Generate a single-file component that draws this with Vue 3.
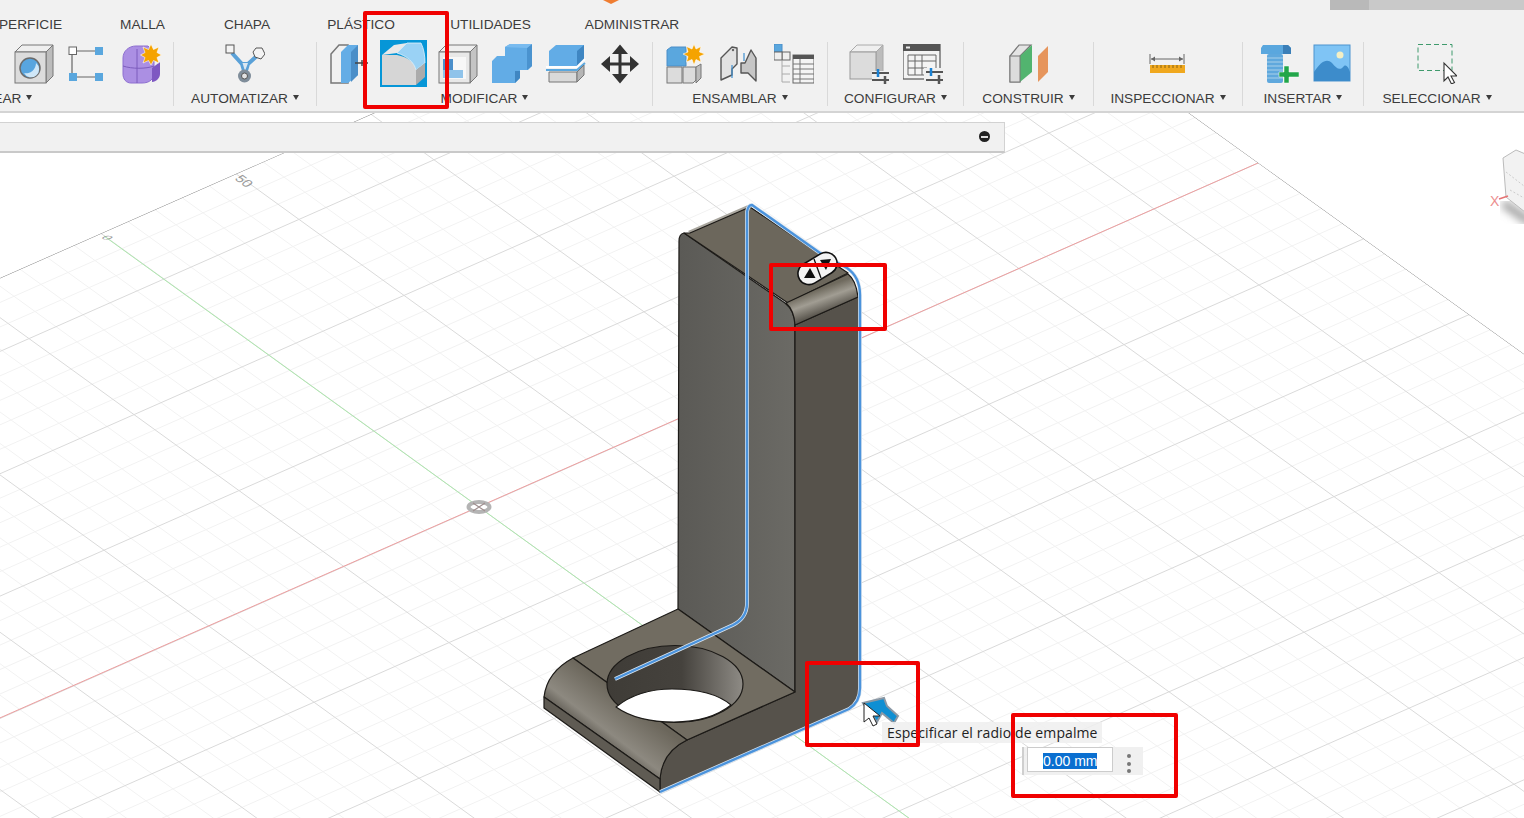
<script setup>
const tabs = ["SUPERFICIE", "MALLA", "CHAPA", "PLÁSTICO", "UTILIDADES", "ADMINISTRAR"];

// grid of the ground plane, in page pixels
const origin = [479, 507];
const stepU = [135, -59.6];
const stepV = [105, 76];

function at(u, v) {
  return [origin[0] + u * stepU[0] + v * stepV[0], origin[1] + u * stepU[1] + v * stepV[1]];
}

function makeLines() {
  const minor = [];
  const major = [];
  for (let i = -60; i <= 60; i++) {
    const t = i / 5;
    const a = at(t, -12), b = at(t, 12), c = at(-12, t), d = at(12, t);
    const list = i % 5 === 0 ? major : minor;
    list.push({ id: "u" + i, x1: a[0], y1: a[1], x2: b[0], y2: b[1] });
    list.push({ id: "v" + i, x1: c[0], y1: c[1], x2: d[0], y2: d[1] });
  }
  return { minor, major };
}
const { minor, major } = makeLines();
</script>

<template>
  <div class="app">
    <header class="toolbar">
      <i class="orange-tip"></i>
      <div class="top-strip"><span></span></div>
      <nav class="tabs">
        <span v-for="t in tabs" :key="t">{{ t }}</span>
      </nav>
      <div class="groups">
        <section class="group crear">
          <div class="icons">
            <svg class="ico" viewBox="0 0 40 40">
              <path d="M1 8 8 1H39L32 8Z" fill="#efefef" stroke="#777"/>
              <path d="M32 8 39 1V32L32 39Z" fill="#bcbcbc" stroke="#777"/>
              <rect x="1" y="8" width="31" height="31" fill="#dcdcdc" stroke="#777"/>
              <circle cx="16" cy="24" r="10" fill="#58a5df" stroke="#6b6b6b" stroke-width="1.5"/>
              <path d="M22 19A8 8 0 1 1 10 29 10 10 0 0 0 22 19Z" fill="#cfe7f8"/>
            </svg>
            <svg class="ico" viewBox="0 0 40 40">
              <path d="M9 7H27M4 11V29M9 33H27" stroke="#666" stroke-width="1.2" fill="none"/>
              <rect x="1" y="3" width="7.500" height="7.500" fill="#fff" stroke="#666"/>
              <rect x="27" y="3" width="8" height="8" fill="#5aa7de"/>
              <rect x="1" y="29" width="8" height="8" fill="#5aa7de"/>
              <rect x="27" y="29" width="8" height="8" fill="#5aa7de"/>
            </svg>
            <svg class="ico" viewBox="0 0 40 40">
              <path d="M1 14C1 7 7 2 14 2H26L32 8V28C32 35 28 39 20 39H9C4 39 1 35 1 30Z" fill="#ab8fe3" stroke="#8d6fd0"/>
              <path d="M1 22C10 25 24 25 32 22M15 5V39" stroke="#7d5dbd" fill="none"/>
              <path d="M30 24 38 18V30C38 34 34 38 30 38Z" fill="#7e58c2"/>
              <path d="M29 0 31.500 5.500 37 3 35 8.500 39.500 11 35 13.500 37 19 31.500 16.500 29 21 26.500 16.500 21 19 23 13.500 18.500 11 23 8.500 21 3 26.500 5.500Z" fill="#f5a300" stroke="#fff" stroke-width=".6"/>
            </svg>
          </div>
          <div class="label">CREAR<b></b></div>
        </section>

        <section class="group automatizar">
          <div class="icons">
            <svg class="ico" viewBox="0 0 40 40">
              <path d="M7 9 17 20H23L33 11M17 20 20 30 23 20" stroke="#5aa1d8" stroke-width="4" fill="none"/>
              <path d="M17.500 19H23L20 27Z" fill="#dbe8f2"/>
              <rect x="1" y="1" width="8" height="8" fill="#f4f4f4" stroke="#555"/>
              <path d="M31 4 37 4 40 10 36 15 30 13 28 8Z" fill="#f4f4f4" stroke="#555"/>
              <circle cx="19.500" cy="32" r="6.500" fill="#7f8d9a"/>
              <circle cx="19.500" cy="32" r="3" fill="#e3e3e3" stroke="#555"/>
            </svg>
          </div>
          <div class="label">AUTOMATIZAR<b></b></div>
        </section>

        <section class="group modificar">
          <div class="icons">
            <svg class="ico" viewBox="0 0 40 40">
              <path d="M1 39V10L9 1H18V39Z" fill="#f1f1f1" stroke="#777" stroke-width="1.500"/>
              <path d="M11 8 18 1H28V31L18 39H11Z" fill="#64ade6"/>
              <path d="M28 1V31L21 38V8Z" fill="#4a8ec8"/>
              <path d="M25 19H38M32 16V22" stroke="#444" stroke-width="1.400" fill="none"/>
            </svg>
            <svg class="ico active" viewBox="0 0 47 47">
              <rect width="47" height="47" fill="#0696d7"/>
              <path d="M2 15 14 5 27 3 17 13Z" fill="#e9e9e9"/>
              <path d="M2 15H17C27 17 35 22 36 30V45H2Z" fill="#d6d6d6"/>
              <path d="M27 3H41C44 9 45 16 45 23L36 30C34 22 27 16 17 13Z" fill="#9ad2f5" stroke="#e3f2fb" stroke-width=".8"/>
              <path d="M36 30 45 23V37L36 45Z" fill="#ababab"/>
            </svg>
            <svg class="ico" viewBox="0 0 40 40">
              <path d="M1 8 8 1H39L32 8Z" fill="#efefef" stroke="#777"/>
              <path d="M32 8 39 1V32L32 39Z" fill="#c4c4c4" stroke="#777"/>
              <rect x="1" y="8" width="31" height="31" fill="#e8e8e8" stroke="#777"/>
              <rect x="5" y="13" width="23" height="22" fill="#f7f7f7"/>
              <rect x="5" y="26" width="20" height="8" fill="#8fc3ea"/>
              <rect x="5" y="15" width="10" height="11" fill="#4b8fca"/>
            </svg>
            <svg class="ico" viewBox="0 0 40 40">
              <path d="M0 17 5 12H13V3L18 0H40V22L36 26H28V34L23 39H0Z" fill="#62ace6"/>
              <path d="M35 4 40 0V22L35 26Z" fill="#4a93cf"/>
              <path d="M23 27H28V34L23 39Z" fill="#3f86c2"/>
              <path d="M13 3 18 0H40L35 4Z" fill="#79bbef"/>
            </svg>
            <svg class="ico" viewBox="0 0 40 40">
              <path d="M3 7 10 1H38V17L31 23H3Z" fill="#62ace6"/>
              <path d="M31 7 38 1V17L31 23Z" fill="#3f86c2"/>
              <path d="M0 23H31L39 15" stroke="#fff" stroke-width="2" fill="none"/>
              <path d="M0 26H31L39 19" stroke="#5aa7de" stroke-width="2" fill="none"/>
              <path d="M3 28H31V38H3Z" fill="#d9d9d9" stroke="#777"/>
              <path d="M31 28 38 21V31L31 38Z" fill="#b5b5b5" stroke="#777"/>
            </svg>
            <svg class="ico" viewBox="0 0 40 40">
              <path d="M18.500 10H21.500V18.500H30V12L39 20 30 28V21.500H21.500V30H28L20 39.500 12 30H18.500V21.500H10V28L1 20 10 12V18.500H18.500V10H12L20 .5 28 10Z" fill="#333"/>
            </svg>
          </div>
          <div class="label">MODIFICAR<b></b></div>
        </section>

        <section class="group ensamblar">
          <div class="icons">
            <svg class="ico" viewBox="0 0 40 40">
              <path d="M1 22V6L5 3H20V22Z" fill="#5aa7de" stroke="#4a8ec8"/>
              <rect x="1" y="23" width="15" height="16" fill="#dcdcdc" stroke="#777"/>
              <path d="M17 23H30V36L27 39H17Z" fill="#dcdcdc" stroke="#777"/>
              <path d="M30 23 35 20V34L30 39Z" fill="#bcbcbc" stroke="#777"/>
              <path d="M28 0 30 5 35 2.500 33.500 8 39 10 33.500 12.500 35 18 30 15.500 28 21 26 15.500 20.500 18 22 12.500 17 10 22 8 20.500 2.500 26 5Z" fill="#f5a300" stroke="#fff" stroke-width=".6"/>
            </svg>
            <svg class="ico" viewBox="0 0 40 40">
              <path d="M1 36V14L12 3 17 4V20L12 25V31Z" fill="#e2e2e2" stroke="#555" stroke-width="1.400" stroke-linejoin="round"/>
              <path d="M21 19H25L31 6 36 14V37L28 29H21Z" fill="#c6c6c6" stroke="#555" stroke-width="1.400" stroke-linejoin="round"/>
              <path d="M12 21V34M24 9V17" stroke="#3f8fd0" stroke-width="1.200" fill="none"/>
              <circle cx="13" cy="6" r="1.200" fill="#666"/>
            </svg>
            <svg class="ico" viewBox="0 0 40 40">
              <rect x="0" y="0" width="8" height="8" fill="#5aa7de" stroke="#4a8ec8"/>
              <rect x="8" y="8" width="8" height="8" fill="#efefef" stroke="#666"/>
              <rect x="0" y="8" width="8" height="8" fill="#efefef" stroke="#666"/>
              <path d="M8 16V38M8 22H16M8 30H16M8 38H16" stroke="#aaa" fill="none"/>
              <rect x="19" y="11" width="21" height="28" fill="#f4f4f4" stroke="#666"/>
              <rect x="19" y="11" width="21" height="4" fill="#555"/>
              <path d="M19 20H40M19 25H40M19 30H40M19 35H40M26 15V39" stroke="#777" fill="none"/>
            </svg>
          </div>
          <div class="label">ENSAMBLAR<b></b></div>
        </section>

        <section class="group configurar">
          <div class="icons">
            <svg class="ico" viewBox="0 0 40 40">
              <path d="M1 8 8 1H34L27 8Z" fill="#efefef" stroke="#aaa"/>
              <path d="M27 8 34 1V28L27 35Z" fill="#bcbcbc" stroke="#aaa"/>
              <rect x="1" y="8" width="26" height="27" fill="#dcdcdc" stroke="#999"/>
              <rect x="23" y="27" width="18" height="14" fill="#f0f0f0"/>
              <path d="M23 29H41M23 36H41" stroke="#555" stroke-width="2" fill="none"/>
              <path d="M29 25V33" stroke="#1a82d4" stroke-width="2.500" fill="none"/>
              <path d="M36 32V40" stroke="#555" stroke-width="2.500" fill="none"/>
            </svg>
            <svg class="ico" viewBox="0 0 40 40">
              <rect x="0" y="0" width="37" height="35" fill="#f4f4f4" stroke="#555" stroke-width="1.2"/>
              <rect x="0" y="0" width="37" height="7" fill="#555"/>
              <rect x="3" y="2.500" width="4" height="2" fill="#eee"/>
              <path d="M5 11H33V31H5ZM5 17H33M5 24H24M12 11V31M19 11V31" stroke="#666" fill="none"/>
              <rect x="21" y="24" width="19" height="15" fill="#f0f0f0"/>
              <path d="M23 28H40M23 36H40" stroke="#555" stroke-width="2" fill="none"/>
              <path d="M28 24V32" stroke="#1a82d4" stroke-width="2.500" fill="none"/>
              <path d="M36 31V40" stroke="#555" stroke-width="2.500" fill="none"/>
            </svg>
          </div>
          <div class="label">CONFIGURAR<b></b></div>
        </section>

        <section class="group construir">
          <div class="icons">
            <svg class="ico" viewBox="0 0 40 40">
              <path d="M1 38V12L10 1H22L11 12V38Z" fill="#e4e4e4" stroke="#777" stroke-width="1.200"/>
              <path d="M11 12 23 1V28L11 38Z" fill="#52b46f"/>
              <rect x="1" y="12" width="10" height="26" fill="#dcdcdc" stroke="#777"/>
              <path d="M29 12 39 2V28L29 38Z" fill="#e6955c"/>
            </svg>
          </div>
          <div class="label">CONSTRUIR<b></b></div>
        </section>

        <section class="group inspeccionar">
          <div class="icons">
            <svg class="ico" viewBox="0 0 40 40">
              <path d="M2 10V20M36 10V20M3 15H35" stroke="#666" fill="none"/>
              <path d="M3 15 7 12.500V17.500ZM35 15 31 12.500V17.500Z" fill="#666"/>
              <rect x="2" y="21" width="35" height="8" fill="#f0a81e"/>
              <path d="M5 21V24M9 21V24M13 21V24M17 21V24M21 21V24M25 21V24M29 21V24M33 21V24" stroke="#8a6410" fill="none"/>
            </svg>
          </div>
          <div class="label">INSPECCIONAR<b></b></div>
        </section>

        <section class="group insertar">
          <div class="icons">
            <svg class="ico" viewBox="0 0 40 40">
              <path d="M2 4 4 1H29L32 4V10H2Z" fill="#5aa7de"/>
              <path d="M24 1H29L32 4V10H24Z" fill="#3b7fb8"/>
              <rect x="8" y="10" width="16" height="29" rx="2" fill="#5fa8dd"/>
              <path d="M8 14H24M8 18H24M8 22H24M8 26H24M8 30H24M8 34H24" stroke="#a9cfea" stroke-width="1.200" fill="none"/>
              <path d="M25 22H30V28H40V33H30V39H25V33H20V28H25Z" fill="#22a64a" stroke="#fff" stroke-width=".5"/>
            </svg>
            <svg class="ico" viewBox="0 0 40 40">
              <rect x="1" y="1" width="36" height="36" fill="#7fc4f5" stroke="#4d94cf"/>
              <circle cx="27" cy="11" r="3.500" fill="#f4efc4"/>
              <path d="M1 28C8 17 14 14 19 19 24 25 27 27 31 22 34 20 36 25 37 28V37H1Z" fill="#3d8ccb"/>
            </svg>
          </div>
          <div class="label">INSERTAR<b></b></div>
        </section>

        <section class="group seleccionar">
          <div class="icons">
            <svg class="ico" viewBox="0 0 40 40">
              <rect x="1" y="0.500" width="34" height="26" fill="none" stroke="#3f9a6c" stroke-dasharray="5 3"/>
              <path d="M27 19V37L31 33 34.500 40 37.500 38.500 34 32H40Z" fill="#fff" stroke="#333" stroke-width="1.100"/>
            </svg>
          </div>
          <div class="label">SELECCIONAR<b></b></div>
        </section>
      </div>
    </header>

    <main class="viewport">
      <svg class="scene" viewBox="0 113 1524 705">
        <defs>
          <clipPath id="ground">
            <polygon points="0,278 879,-110 1524,354 1524,818 0,818"/>
          </clipPath>
          <linearGradient id="leftFace" x1="680" y1="0" x2="795" y2="0" gradientUnits="userSpaceOnUse">
            <stop offset="0" stop-color="#5b5a56"/>
            <stop offset="1" stop-color="#6b6a65"/>
          </linearGradient>
          <linearGradient id="topBand" x1="822" y1="288" x2="830" y2="310" gradientUnits="userSpaceOnUse">
            <stop offset="0" stop-color="#6f6a5e"/>
            <stop offset=".45" stop-color="#a19d93"/>
            <stop offset="1" stop-color="#5c5850"/>
          </linearGradient>
          <linearGradient id="baseBand" x1="573" y1="658" x2="543" y2="697" gradientUnits="userSpaceOnUse">
            <stop offset="0" stop-color="#6b665b"/>
            <stop offset=".75" stop-color="#8d8980"/>
            <stop offset="1" stop-color="#66625a"/>
          </linearGradient>
          <linearGradient id="holeWall" x1="607" y1="0" x2="743" y2="0" gradientUnits="userSpaceOnUse">
            <stop offset="0" stop-color="#3f3c37"/>
            <stop offset=".55" stop-color="#45423d"/>
            <stop offset="1" stop-color="#8e8b85"/>
          </linearGradient>
          <filter id="soft"><feGaussianBlur stdDeviation="4"/></filter>
        </defs>

        <g clip-path="url(#ground)">
          <line v-for="l in minor" :key="l.id" v-bind="l" class="minor"/>
          <line v-for="l in major" :key="l.id" v-bind="l" class="major"/>
          <line x1="-100" y1="762" x2="1258" y2="163" class="axis-x"/>
          <line x1="104" y1="236" x2="960" y2="855" class="axis-y"/>
          <path d="M0 278 879 -110 1524 354" class="edge"/>
        </g>

        <text class="tick" transform="matrix(.8 .58 -.8 .5 234 179)">50</text>
        <text class="tick" transform="matrix(.95 .3 -.75 .3 100 238)">0</text>

        <g class="origin">
          <ellipse cx="479" cy="507" rx="10.500" ry="5" fill="#fff" stroke="#b4b4b4" stroke-width="4"/>
          <path d="M473 511 485 503M473 503 485 511" stroke="#a08f8f" stroke-width="1.200"/>
        </g>

        <!-- view cube, cut by the window edge -->
        <path d="M1503 203 1530 222" stroke="#999" stroke-width="8" filter="url(#soft)"/>
        <path d="M1503 158 1516 150 1530 156V216L1506 197Z" fill="#f2f2f2" stroke="#bbb"/>
        <path d="M1506 172 1524 186M1510 190 1524 198" stroke="#ccc" stroke-dasharray="2 2"/>
        <path d="M1499 199 1508 196" stroke="#e57373" stroke-width="1.500"/>
        <text x="1490" y="206" class="cube-x">X</text>

        <!-- bracket -->
        <path class="ln" fill="url(#leftFace)" d="M679 241Q679 234 684 233L785 303Q795 311 795 325V692L678 609Z"/>
        <path class="ln" fill="#56524b" d="M795 325 858 297Q860 300 860 306V688Q860 702 849 709L660 792V778Q662 752 687 740L795 692Z"/>
        <path fill="#a9a69e" d="M688 231 748 205 752 209 692 235Z"/>
        <path class="ln" fill="#6c675c" d="M684 233 690 233 750 207 848 273 788 303Z"/>
        <path class="ln" fill="url(#topBand)" d="M786 303 848 274Q856 280 858 297L795 325Q794 310 786 303Z"/>

        <path class="ln" fill="#716c61" d="M678 609 573 658 687 740 795 692Z"/>
        <path class="ln" fill="url(#baseBand)" d="M573 658 687 740Q662 752 660 779L544 697Q547 672 573 658Z"/>
        <path class="ln" fill="#5f5b53" d="M544 697V708L660 792V779Z"/>
        <ellipse class="ln" cx="675" cy="684" rx="68" ry="38.500" fill="url(#holeWall)"/>
        <path fill="#fff" class="ln" d="M616 707C632 694 652 689 672 689 698 689 718 694 731 705 716 717 695 722 674 722 650 722 630 717 616 707Z"/>

        <path class="blue-halo" d="M615 679 733 625Q747 618 747 603V212Q748 205 752 205L820 253 847 268Q860 277 860 295V688Q860 702 849 709L660 792"/>
        <path class="blue" d="M615 679 733 625Q747 618 747 603V212Q748 205 752 205L820 253 847 268Q860 277 860 295V688Q860 702 849 709L660 792"/>

        <!-- flip handle on the selected edge -->
        <g class="handle">
          <rect x="-21" y="-11" width="42" height="22" rx="11" transform="translate(817.500 268.500) rotate(-31)" fill="#f4f4f4" stroke="#111" stroke-width="1.600"/>
          <path d="M814 259 821 278" stroke="#111" stroke-width="1.300" fill="none"/>
          <path d="M810 268 815.500 278 804 278Z" fill="#111"/>
          <path d="M820 260 831 259 826 270Z" fill="#111"/>
        </g>

        <!-- cursor -->
        <path d="M863 703 884 698 887 706 898 716 894 723 882 713 877 722Z" fill="#0f8fd3" stroke="#8a98a5" stroke-width="2"/>
        <path d="M864 703V722L869 718 873 726 877 724 873 716H880Z" fill="#fff" stroke="#222"/>
      </svg>

      <div class="browser-bar"><i></i></div>

      <div class="hint">Especificar el radio de empalme</div>
      <div class="radius-input">
        <span class="field"><span class="sel">0.00 mm</span></span>
        <span class="dots"><i></i><i></i><i></i></span>
      </div>
    </main>

    <div class="mark m1"></div>
    <div class="mark m2"></div>
    <div class="mark m3"></div>
    <div class="mark m4"></div>
  </div>
</template>

<style>
html, body { margin: 0; background: #fff; overflow: hidden; }
</style>

<style scoped>
.app {
  position: relative;
  width: 1524px;
  height: 818px;
  overflow: hidden;
  font-family: "Liberation Sans", Arial, sans-serif;
  color: #3c3c3c;
}
.toolbar {
  position: relative;
  height: 113px;
  box-sizing: border-box;
  background: #f1f1f1;
  border-bottom: 2px solid #d4d4d4;
}
.orange-tip {
  position: absolute;
  left: 603px;
  top: 0;
  width: 16px;
  height: 4px;
  background: #ef7d31;
  clip-path: polygon(0 0, 100% 0, 50% 100%);
}
.top-strip {
  position: absolute;
  left: 1330px;
  right: 0;
  top: 0;
  height: 10px;
  background: #c9c9c9;
}
.top-strip span {
  display: block;
  width: 39px;
  height: 100%;
  background: #b9b9b9;
}
.tabs {
  display: grid;
  grid-template-columns: 138px 105px 104px 124px 135px 148px;
  width: 754px;
  height: 42px;
  padding-top: 6px;
  box-sizing: border-box;
  margin-left: -48px;
  align-items: center;
  text-align: center;
  font-size: 13.700px;
  white-space: nowrap;
}
.groups {
  display: flex;
  margin-left: -167px;
  height: 64px;
}
.group {
  flex: none;
  box-sizing: border-box;
  border-right: 1px solid #d9d9d9;
  display: flex;
  flex-direction: column;
  align-items: center;
}
.crear { width: 341px; }
.automatizar { width: 143px; }
.modificar { width: 336px; }
.ensamblar { width: 175px; }
.configurar { width: 136px; }
.construir { width: 130px; }
.inspeccionar { width: 149px; }
.insertar { width: 121px; }
.seleccionar { width: 146px; border-right: 0; }
.icons {
  flex: none;
  display: flex;
  gap: 14px;
  height: 44px;
  padding-top: 2px;
  box-sizing: border-box;
}
.crear .icons { align-self: flex-end; padding-right: 11px; }
.insertar .icons { padding-left: 5px; }
.ico { width: 40px; height: 40px; flex: none; }
.ico.active { width: 47px; height: 47px; margin: -4px -3.5px 0; }
.label {
  flex: none;
  margin-top: 5px;
  font-size: 13.700px;
  line-height: 16px;
  white-space: nowrap;
}
.label b {
  display: inline-block;
  margin-left: 5px;
  vertical-align: 3px;
  border-left: 3px solid transparent;
  border-right: 3px solid transparent;
  border-top: 5px solid #3c3c3c;
}
.viewport {
  position: relative;
  height: 705px;
  background: #fff;
}
.scene {
  display: block;
  width: 1524px;
  height: 705px;
}
.minor { stroke: #f2f2f2; stroke-width: 1; }
.major { stroke: #dadada; stroke-width: 1; }
.axis-x { stroke: #ee9fa0; stroke-width: 1; }
.axis-y { stroke: #aee8ae; stroke-width: 1; }
.edge { fill: none; stroke: #8a8a8a; stroke-width: 1; }
.tick { font-size: 14px; fill: #9a9a9a; }
.cube-x { font-size: 14px; fill: #ec8f8f; }
.ln { stroke: #1c1a17; stroke-width: 1.2; stroke-linejoin: round; }
.blue-halo { fill: none; stroke: #dbe6f0; stroke-width: 3.8; stroke-linejoin: round; }
.blue { fill: none; stroke: #4b93dc; stroke-width: 2.400; stroke-linejoin: round; }
.browser-bar {
  position: absolute;
  left: 0;
  top: 9px;
  width: 1005px;
  height: 31px;
  box-sizing: border-box;
  background: #f1f1f1;
  border: 1px solid #d2d2d2;
  border-left: 0;
  border-bottom: 2px solid #c9c9c9;
}
.browser-bar i {
  position: absolute;
  left: 979px;
  top: 8px;
  width: 11px;
  height: 11px;
  border-radius: 50%;
  background: #222;
}
.browser-bar i::after {
  content: "";
  position: absolute;
  left: 2px;
  right: 2px;
  top: 5px;
  height: 1.500px;
  background: #ddd;
}
.hint {
  position: absolute;
  left: 882px;
  top: 609px;
  width: 220px;
  height: 21px;
  box-sizing: border-box;
  padding-left: 5px;
  background: rgba(238, 238, 238, .85);
  font-family: "Open Sans", sans-serif;
  font-size: 14px;
  letter-spacing: .1px;
  line-height: 21px;
  color: #222;
  white-space: nowrap;
}
.radius-input {
  position: absolute;
  left: 1022px;
  top: 634px;
  width: 121px;
  height: 28px;
  display: flex;
  box-sizing: border-box;
  padding-left: 3px;
  background: rgba(238, 238, 238, .9);
  border-left: 2px solid #cfcfcf;
}
.field {
  width: 86px;
  height: 25px;
  box-sizing: border-box;
  padding: 5px 0 0 15px;
  background: #fff;
  border: 1px solid #cccccc;
  font-size: 14px;
  line-height: 16px;
}
.sel {
  background: #0a6fd0;
  color: #fff;
  display: block;
  width: 54px;
  white-space: nowrap;
  overflow: hidden;
}
.dots {
  display: flex;
  flex-direction: column;
  gap: 3.500px;
  margin: 7px 0 0 14px;
}
.dots i {
  width: 4px;
  height: 4px;
  border-radius: 50%;
  background: #777;
}
.mark {
  position: absolute;
  box-sizing: border-box;
  border: 4px solid #f00000;
  border-radius: 2px;
}
.m1 { left: 363px; top: 11px; width: 86px; height: 98px; }
.m2 { left: 769px; top: 263px; width: 118px; height: 68px; }
.m3 { left: 805px; top: 661px; width: 115px; height: 86px; }
.m4 { left: 1011px; top: 713px; width: 167px; height: 85px; }
</style>
